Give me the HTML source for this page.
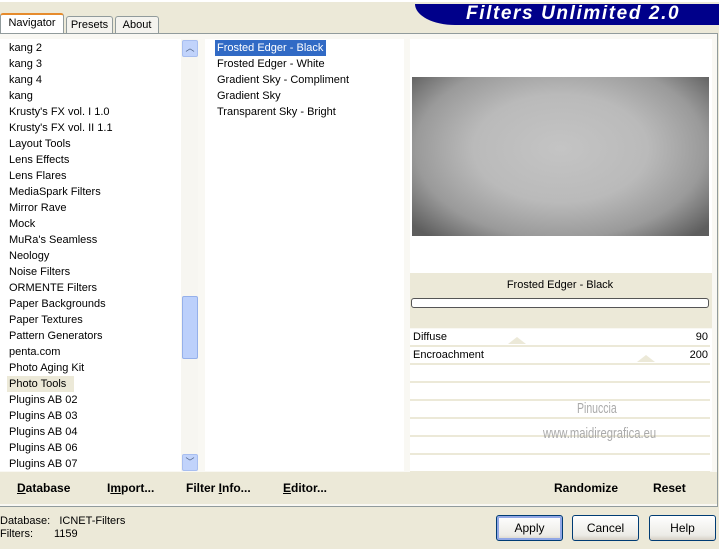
<!DOCTYPE html><html><head><style>
body{margin:0;width:719px;height:549px;background:#ece9d8;font-family:"Liberation Sans",sans-serif;font-size:11px;position:relative;overflow:hidden;color:#000}
.a{position:absolute}
.tab{position:absolute;border:1px solid #919b9c;border-bottom:none;background:#f4f3ee;text-align:center;line-height:17px;border-radius:3px 3px 0 0}
.list div{height:16px;line-height:18px;padding-left:9px;white-space:nowrap}
.btn{position:absolute;border:1px solid #003c74;border-radius:3px;background:linear-gradient(#fff,#ecebe6 80%,#d6d0c5);text-align:center;line-height:24px;font-size:12px}
.row{position:absolute;left:410px;width:300px;height:16px;background:#fff;border-bottom:2px solid #ece9d8}
b{font-size:12px}
</style></head><body>
<div class="a" style="left:0;top:0;width:719px;height:2px;background:#fff"></div>
<div class="a" style="left:415px;top:4px;width:304px;height:21px;background:#00008a;border-radius:0 0 0 40px/0 0 0 21px"></div>
<div class="a" style="left:466px;top:3px;font-size:19px;font-weight:bold;font-style:italic;color:#fff;letter-spacing:1.6px">Filters Unlimited 2.0</div>
<div class="tab" style="left:0;top:13px;width:62px;height:21px;background:#fff;border-top:2px solid #e68b2c">Navigator</div>
<div class="tab" style="left:66px;top:16px;width:45px;height:17px">Presets</div>
<div class="tab" style="left:115px;top:16px;width:42px;height:17px">About</div>
<div class="a" style="left:0;top:33px;width:717px;height:472px;border:1px solid #919b9c;border-left:none;background:#f9f8f3"></div>
<div class="a list" style="left:0;top:39px;width:181px;height:432px;background:#fff">
<div>kang 2</div><div>kang 3</div><div>kang 4</div><div>kang</div><div>Krusty's FX vol. I 1.0</div><div>Krusty's FX vol. II 1.1</div><div>Layout Tools</div><div>Lens Effects</div><div>Lens Flares</div><div>MediaSpark Filters</div><div>Mirror Rave</div><div>Mock</div><div>MuRa's Seamless</div><div>Neology</div><div>Noise Filters</div><div>ORMENTE Filters</div><div>Paper Backgrounds</div><div>Paper Textures</div><div>Pattern Generators</div><div>penta.com</div><div>Photo Aging Kit</div><div><span style="background:#ece9d8;margin-left:-2px;padding:0 8px 0 2px;display:inline-block;line-height:16px;margin-top:1px">Photo Tools</span></div><div>Plugins AB 02</div><div>Plugins AB 03</div><div>Plugins AB 04</div><div>Plugins AB 06</div><div>Plugins AB 07</div>
</div>
<div class="a" style="left:181px;top:39px;width:17px;height:432px;background:#f7f6f1"></div>
<div class="a" style="left:182px;top:40px;width:14px;height:15px;background:#c1d3fb;border:1px solid #a8bef0;border-radius:2px;text-align:center;line-height:15px;color:#4d6185;font-size:9px">︿</div>
<div class="a" style="left:182px;top:296px;width:14px;height:61px;background:#bcd0fb;border:1px solid #95b0ea;border-radius:2px"></div>
<div class="a" style="left:182px;top:454px;width:14px;height:15px;background:#c1d3fb;border:1px solid #a8bef0;border-radius:2px;text-align:center;line-height:15px;color:#4d6185;font-size:9px">﹀</div>
<div class="a list" style="left:205px;top:39px;width:199px;height:432px;background:#fff">
<div style="padding-left:12px"><span style="background:#316ac5;color:#fff;margin-left:-2px;padding:0 3px 0 2px;display:inline-block;line-height:16px;margin-top:1px">Frosted Edger - Black</span></div>
<div style="padding-left:12px">Frosted Edger - White</div><div style="padding-left:12px">Gradient Sky - Compliment</div><div style="padding-left:12px">Gradient Sky</div><div style="padding-left:12px">Transparent Sky - Bright</div>
</div>
<div class="a" style="left:410px;top:39px;width:302px;height:234px;background:#fff"></div>
<div class="a" style="left:412px;top:77px;width:297px;height:159px;background:radial-gradient(ellipse 65% 75% at 50% 45%,#c4c4c4 0%,#bababa 45%,#9a9a9a 75%,#5e5e5e 100%)"></div>
<div class="a" style="left:410px;top:273px;width:302px;height:55px;background:#ece9d8"></div>
<div class="a" style="left:410px;top:279px;width:300px;text-align:center">Frosted Edger - Black</div>
<div class="a" style="left:411px;top:298px;width:296px;height:8px;border:1px solid #555;border-radius:3px;background:#fff"></div>
<div class="a" style="left:410px;top:329px;width:302px;height:142px;background:#fff"></div>
<div class="row" style="top:329px"></div><div class="row" style="top:347px"></div><div class="row" style="top:365px"></div><div class="row" style="top:383px"></div><div class="row" style="top:401px"></div><div class="row" style="top:419px"></div><div class="row" style="top:437px"></div><div class="row" style="top:455px"></div>
<div class="a" style="left:508px;top:337px;border:9px solid transparent;border-bottom:7px solid #ece9d8;border-top:none"></div>
<div class="a" style="left:637px;top:355px;border:9px solid transparent;border-bottom:7px solid #ece9d8;border-top:none"></div>
<div class="a" style="left:413px;top:331px">Diffuse</div><div class="a" style="left:413px;top:349px">Encroachment</div>
<div class="a" style="left:670px;top:331px;width:38px;text-align:right">90</div><div class="a" style="left:670px;top:349px;width:38px;text-align:right">200</div>
<div class="a" style="left:577px;top:400px;color:#aaa;font-size:15px;transform:scaleX(.7);transform-origin:left">Pinuccia</div>
<div class="a" style="left:543px;top:425px;color:#aaa;font-size:15px;transform:scaleX(.75);transform-origin:left">www.maidiregrafica.eu</div>
<div class="a" style="left:0;top:472px;width:717px;height:32px;background:#ece9d8"></div>
<div class="a" style="left:17px;top:481px"><b><u>D</u>atabase</b></div>
<div class="a" style="left:107px;top:481px"><b>I<u>m</u>port...</b></div>
<div class="a" style="left:186px;top:481px"><b>Filter <u>I</u>nfo...</b></div>
<div class="a" style="left:283px;top:481px"><b><u>E</u>ditor...</b></div>
<div class="a" style="left:554px;top:481px"><b>Randomize</b></div>
<div class="a" style="left:653px;top:481px"><b>Reset</b></div>
<div class="a" style="left:0;top:515px;line-height:13px">Database:&nbsp;&nbsp; ICNET-Filters<br>Filters:<span style="position:absolute;left:54px">1159</span></div>
<div class="btn" style="left:496px;top:515px;width:65px;height:24px;border-color:#003c74;box-shadow:inset 0 0 0 2px #91a7e5">Apply</div>
<div class="btn" style="left:572px;top:515px;width:65px;height:24px">Cancel</div>
<div class="btn" style="left:649px;top:515px;width:65px;height:24px">Help</div>
</body></html>
